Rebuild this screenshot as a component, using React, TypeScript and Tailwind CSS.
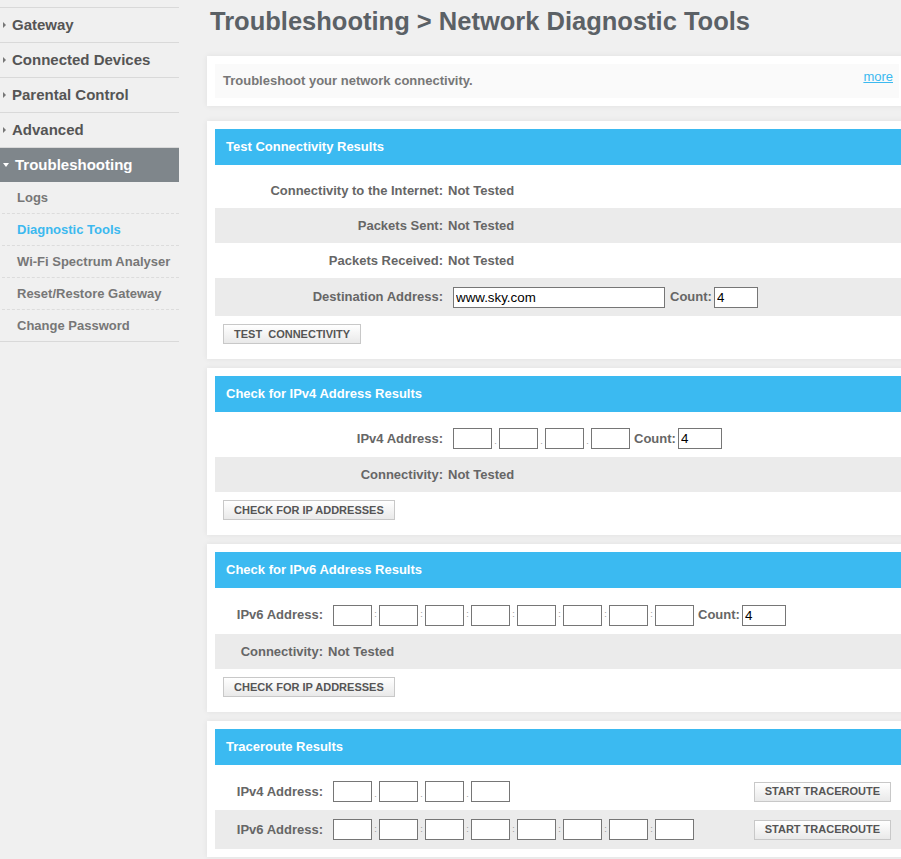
import type React from "react"

const topItems = ["Gateway", "Connected Devices", "Parental Control", "Advanced"]
const subItems = ["Logs", "Diagnostic Tools", "Wi-Fi Spectrum Analyser", "Reset/Restore Gateway", "Change Password"]

function Sidebar() {
  return (
    <div className="w-[179px] shrink-0 pt-[7px]">
      {topItems.map((t) => (
        <div key={t} className="flex h-[35px] items-center border-t border-[#d9d9d9] text-[15px] font-bold text-[#555]">
          <span className="ml-[3px] mr-[6px] h-0 w-0 border-y-[3px] border-l-[3px] border-y-transparent border-l-[#777]" />
          {t}
        </div>
      ))}
      <div className="flex h-[35px] items-center border-t border-[#d9d9d9] bg-[#7f868b] text-[15px] font-bold text-white">
        <span className="ml-[3px] mr-[6px] h-0 w-0 border-x-[3px] border-t-[4px] border-x-transparent border-t-white" />
        Troubleshooting
      </div>
      {subItems.map((t, i) => {
        const last = i === subItems.length - 1
        return (
          <div
            key={t}
            className={`flex h-[32px] items-center pl-[17px] text-[13px] font-bold ${
              last ? "border-b border-solid border-[#d9d9d9]" : "ml-[2px] border-b border-dashed border-[#dcdcdc] !pl-[15px]"
            } ${t === "Diagnostic Tools" ? "text-[#3cb9ef]" : "text-[#777]"}`}
          >
            {t}
          </div>
        )
      })}
    </div>
  )
}

function Panel({ children, className }: { children: React.ReactNode; className?: string }) {
  return (
    <div className={`w-[710px] bg-white px-2 pt-2 shadow-[0_0_6px_rgba(0,0,0,0.07)] ${className ?? ""}`}>{children}</div>
  )
}

function Header({ title }: { title: string }) {
  return (
    <div className="flex h-[36px] items-center bg-[#3bbaf1] pl-[11px] text-[13px] font-bold text-white">{title}</div>
  )
}

function Btn({ children, className }: { children: React.ReactNode; className?: string }) {
  return (
    <button
      className={`flex h-[20px] items-center border border-[#c8c8c8] bg-gradient-to-b from-white to-[#e9e9e9] px-[10px] text-[11px] font-bold whitespace-pre text-[#555] ${className ?? ""}`}
    >
      {children}
    </button>
  )
}

function Box({ w, value }: { w: string; value?: string }) {
  return (
    <input
      readOnly
      value={value ?? ""}
      className={`h-[21px] ${w} border border-[#767676] bg-white px-[2px] text-[13.33px] font-normal text-black outline-none`}
    />
  )
}

function Fields({ n, sep }: { n: number; sep: string }) {
  return (
    <div className="flex items-center">
      {Array.from({ length: n }).map((_, i) => (
        <div key={i} className="flex items-center">
          {i > 0 && (
            <span className={`w-[7px] text-center text-[9px] font-normal text-[#999] ${sep === "." ? "pt-[6px]" : ""}`}>{sep}</span>
          )}
          <Box w="w-[39px]" />
        </div>
      ))}
    </div>
  )
}

function Count({ ml = "ml-[4px]" }: { ml?: string }) {
  return (
    <div className={`flex items-center ${ml}`}>
      <span className="mr-[2px] text-[13px] font-bold text-[#666]">Count:</span>
      <Box w="w-[44px]" value="4" />
    </div>
  )
}

function Row({
  label,
  lw,
  h,
  gray,
  children,
}: {
  label: string
  lw: string
  h: string
  gray?: boolean
  children: React.ReactNode
}) {
  return (
    <div className={`flex items-center ${h} ${gray ? "bg-[#ebebeb]" : ""}`}>
      <div className={`${lw} shrink-0 text-right text-[13px] font-bold text-[#666]`}>{label}</div>
      <div className="flex flex-1 items-center pl-[5px] text-[13px] font-bold text-[#666]">{children}</div>
    </div>
  )
}

export default function App() {
  return (
    <div className="flex h-[859px] w-[901px] overflow-hidden bg-[#f0f0f0] font-['Liberation_Sans',Arial,sans-serif]">
      <Sidebar />
      <div className="shrink-0 pl-[28px]">
        <div className="h-[56px] pl-[3px] pt-[6px] text-[25.5px] leading-[30px] font-bold text-[#5b6166]">
          Troubleshooting &gt; Network Diagnostic Tools
        </div>

        <Panel className="pb-2">
          <div className="mr-[10px] flex h-[34px] justify-between bg-[#fafafa]">
            <span className="self-center pl-2 text-[13px] font-bold text-[#777]">Troubleshoot your network connectivity.</span>
            <a className="pr-[6px] pt-[3px] text-[13px] text-[#3bb9f0] underline">more</a>
          </div>
        </Panel>

        <Panel className="mt-[15px] pb-[15px]">
          <Header title="Test Connectivity Results" />
          <div className="mt-2">
            <Row label="Connectivity to the Internet:" lw="w-[228px]" h="h-[35px]">Not Tested</Row>
            <Row label="Packets Sent:" lw="w-[228px]" h="h-[35px]" gray>Not Tested</Row>
            <Row label="Packets Received:" lw="w-[228px]" h="h-[35px]">Not Tested</Row>
            <Row label="Destination Address:" lw="w-[228px]" h="h-[38px]" gray>
              <div className="ml-[5px] flex items-center">
                <Box w="w-[212px]" value="www.sky.com" />
                <Count ml="ml-[5px]" />
              </div>
            </Row>
          </div>
          <Btn className="ml-2 mt-2">{"TEST\u00a0 CONNECTIVITY"}</Btn>
        </Panel>

        <Panel className="mt-[9px] pb-[15px]">
          <Header title="Check for IPv4 Address Results" />
          <div className="mt-2">
            <Row label="IPv4 Address:" lw="w-[228px]" h="h-[37px]">
              <div className="ml-[5px] flex items-center">
                <Fields n={4} sep="." />
                <Count />
              </div>
            </Row>
            <Row label="Connectivity:" lw="w-[228px]" h="h-[35px]" gray>Not Tested</Row>
          </div>
          <Btn className="ml-2 mt-2">CHECK FOR IP ADDRESSES</Btn>
        </Panel>

        <Panel className="mt-[9px] pb-[15px]">
          <Header title="Check for IPv6 Address Results" />
          <div className="mt-2">
            <Row label="IPv6 Address:" lw="w-[108px]" h="h-[38px]">
              <div className="ml-[5px] flex items-center">
                <Fields n={8} sep=":" />
                <Count />
              </div>
            </Row>
            <Row label="Connectivity:" lw="w-[108px]" h="h-[35px]" gray>Not Tested</Row>
          </div>
          <Btn className="ml-2 mt-2">CHECK FOR IP ADDRESSES</Btn>
        </Panel>

        <Panel className="mt-[9px] pb-2">
          <Header title="Traceroute Results" />
          <div className="mt-2">
            <Row label="IPv4 Address:" lw="w-[108px]" h="h-[37px]">
              <div className="ml-[5px] flex items-center">
                <Fields n={4} sep="." />
              </div>
              <Btn className="ml-auto mr-[18px]">START TRACEROUTE</Btn>
            </Row>
            <Row label="IPv6 Address:" lw="w-[108px]" h="h-[39px]" gray>
              <div className="ml-[5px] flex items-center">
                <Fields n={8} sep=":" />
              </div>
              <Btn className="ml-auto mr-[18px]">START TRACEROUTE</Btn>
            </Row>
          </div>
        </Panel>
      </div>
    </div>
  )
}
